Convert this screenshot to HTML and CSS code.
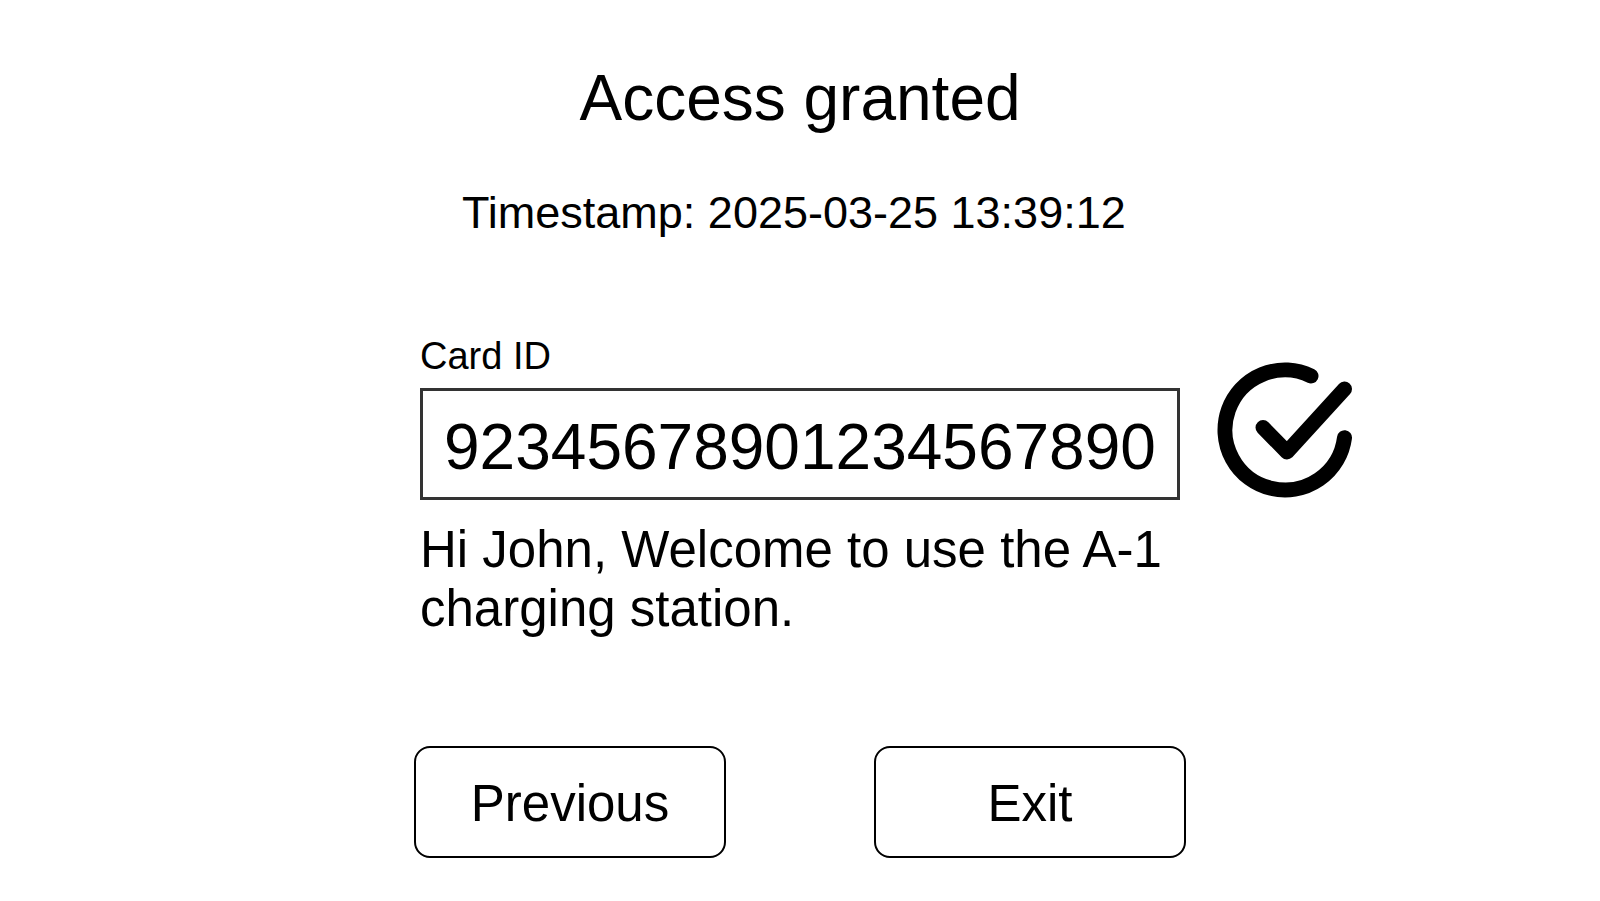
FILE: index.html
```html
<!DOCTYPE html>
<html lang="en">
<head>
    <meta charset="UTF-8">
    <meta name="viewport" content="width=device-width, initial-scale=1.0">
    <title>Access granted</title>
    <link rel="stylesheet" href="styles.css">
</head>
<body>
    <main class="page">
        <h1>Access granted</h1>
        <p class="timestamp">Timestamp: 2025-03-25 13:39:12</p>

        <div class="card-row">
            <div class="field">
                <label for="cardId">Card ID</label>
                <input type="text" id="cardId" name="cardId" value="92345678901234567890" readonly>
            </div>
            <svg class="check" viewBox="0 -4 136 140" role="img" aria-label="Granted">
                <path d="M94 11.9A60 60 0 1 0 127.5 73.7"/>
                <path d="M46 63.5L70 88L127.5 25"/>
            </svg>
        </div>
        <p class="message">Hi John, Welcome to use the A-1 charging station.</p>

        <div class="buttons">
            <button type="button">Previous</button>
            <button type="button">Exit</button>
        </div>
    </main>
</body>
</html>
```
FILE: styles.css
```css
* {
    box-sizing: border-box;
}
body {
    margin: 0;
    background: #fff;
    color: #000;
    font-family: "Liberation Sans", Arial, sans-serif;
}
.page {
    padding: 62px 0 40px;
}
h1 {
    margin: 0;
    font-size: 64px;
    font-weight: normal;
    line-height: 72px;
    text-align: center;
}
.timestamp {
    max-width: 760px;
    margin: 53px auto 0;
    padding: 0 0 0 42px;
    font-size: 45px;
    line-height: 52px;
}
/* the side columns keep the field centred, the icon sits in the right one */
.card-row {
    display: grid;
    grid-template-columns: 1fr minmax(0, 760px) 1fr;
    align-items: end;
    margin-top: 95px;
}
.field {
    grid-column: 2;
    display: flex;
    flex-direction: column;
    gap: 10px;
}
label {
    font-size: 38px;
    line-height: 44px;
}
input {
    width: 100%;
    height: 112px;
    padding: 6px 16px 0 21px;
    border: 3px solid #333;
    background: #fff;
    color: #000;
    font-family: inherit;
    font-size: 64px;
    outline: none;
}
.check {
    width: 136px;
    height: 140px;
    margin-left: 37px;
    fill: none;
    stroke: #000;
    stroke-width: 15;
    stroke-linecap: round;
    stroke-linejoin: round;
}
.message {
    max-width: 760px;
    margin: 20px auto 0;
    font-size: 51px;
    line-height: 59px;
}
.buttons {
    display: flex;
    justify-content: space-between;
    max-width: 772px;
    margin: 108px auto 0;
}
button {
    width: 312px;
    height: 112px;
    padding: 2px 0 0;
    border: 2px solid #000;
    border-radius: 16px;
    background: #fff;
    color: #000;
    font-family: inherit;
    font-size: 51px;
    cursor: pointer;
}
button:hover {
    background: #eee;
}
```
